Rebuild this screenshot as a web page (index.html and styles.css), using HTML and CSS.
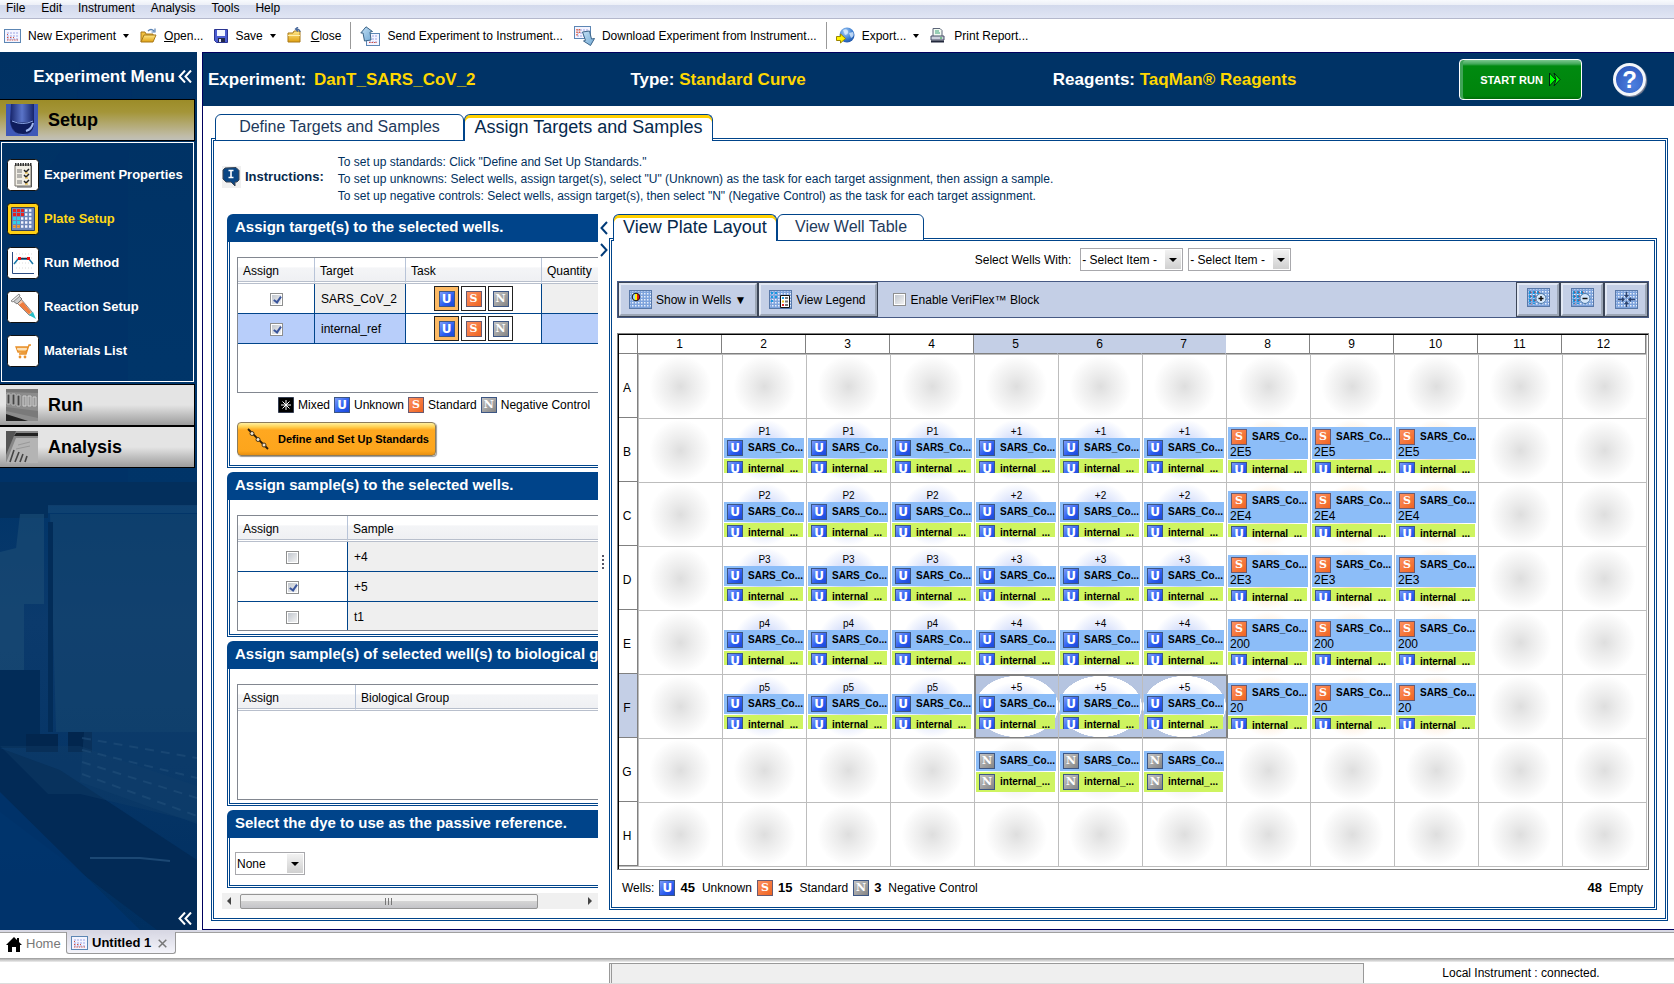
FILE: index.html
```html
<!DOCTYPE html>
<html lang="en">
<head>
<meta charset="utf-8">
<title>DanT_SARS_CoV_2 - Plate Setup</title>
<link rel="stylesheet" href="styles.css">
</head>
<body>
<svg class="defs" aria-hidden="true">
  <defs>
    <pattern id="dots" width="3" height="3" patternUnits="userSpaceOnUse"><rect width="3" height="3" fill="#7da3dc"/><rect width="1.500" height="1.500" fill="#e8f0fc"/></pattern>
    <pattern id="dots2" width="3" height="3" patternUnits="userSpaceOnUse"><rect width="2" height="2" fill="#c9cdf2"/></pattern>
    <linearGradient id="folder" x1="0" y1="0" x2="0" y2="1"><stop offset="0" stop-color="#ffe88a"/><stop offset="1" stop-color="#e0a010"/></linearGradient>
    <linearGradient id="arrow" x1="0" y1="0" x2="1" y2="1"><stop offset="0" stop-color="#c4e0f4"/><stop offset="1" stop-color="#70a8d4"/></linearGradient>
    <radialGradient id="globe" cx=".4" cy=".3" r=".8"><stop offset="0" stop-color="#a8d0f8"/><stop offset=".6" stop-color="#3a7cd0"/><stop offset="1" stop-color="#1a4a9a"/></radialGradient>
    <linearGradient id="tube" x1="0" y1="0" x2="1" y2="0"><stop offset="0" stop-color="#16246a"/><stop offset=".5" stop-color="#5a74c8"/><stop offset="1" stop-color="#16246a"/></linearGradient>
    <symbol id="i-plate" viewBox="0 0 17 14"><rect x=".5" y=".5" width="16" height="13" fill="#f4f4ff" stroke="#5c86b4"/><rect x="2" y="2" width="13" height="10" fill="url(#dots2)"/><path d="M3 5.500h1M3 8.500h2M6 8.500h2M9 8.500h1M3 11h11" stroke="#d05040" stroke-width="1.200" stroke-dasharray="1.400 1"/></symbol>
    <symbol id="i-chev" viewBox="0 0 14 13"><path d="M7 .5 1.500 6.500 7 12.500M13 .5 7.500 6.500 13 12.500" fill="none" stroke="#fff" stroke-width="2"/></symbol>
  </defs>
</svg>

<nav class="menubar" aria-label="Menu">
  <button>File</button><button>Edit</button><button>Instrument</button><button>Analysis</button><button>Tools</button><button>Help</button>
</nav>

<div class="toolbar">
  <button class="tool"><svg width="17" height="14"><use href="#i-plate"/></svg><span>New Experiment</span><i class="caret"></i></button>
  <button class="tool"><svg width="17" height="16" viewBox="0 0 17 16"><path d="M1 14V4h4l1 2h7v3" fill="#f0c040" stroke="#a87818"/><path d="m1 14 3-7h12l-3 7z" fill="url(#folder)" stroke="#a87818"/><path d="M8 3q3-3 6 0M15 .5V4h-3.500" fill="none" stroke="#5a82b4" stroke-width="1.200"/></svg><span><u>O</u>pen...</span></button>
  <button class="tool"><svg width="14" height="14" viewBox="0 0 14 14"><path d="M.5.5h13v13h-11l-2-2z" fill="#4a5cd0" stroke="#2a3490"/><path d="M3 1h8v6H3z" fill="#f2f6ff"/><path d="M4 9h7v4H4z" fill="#22284a"/><path d="M5 10h2v3H5z" fill="#dfe4f4"/></svg><span>Save</span><i class="caret"></i></button>
  <button class="tool wide"><svg width="15" height="17" viewBox="0 0 15 17"><path d="M1 15V6h5l1-2h6v11z" fill="url(#folder)" stroke="#a87818"/><path d="M1 8.500h12" stroke="#fff0b0"/><path d="M13 5q0-3-4-3M11 0 8.500 2 11 4.500" fill="none" stroke="#4a6a9c" stroke-width="1.300"/></svg><span><u>C</u>lose</span></button>
  <i class="sep"></i>
  <button class="tool"><svg width="20" height="20" viewBox="0 0 20 20"><rect x="6.500" y="7.500" width="13" height="12" fill="#f4f4ff" stroke="#5c86b4"/><rect x="8" y="9" width="10" height="9" fill="url(#dots2)"/><path d="M9 16.500h8" stroke="#d05040" stroke-dasharray="1.500 1"/><path d="M6 .8 12.500 5.500 10 6l1 8-6.500 1L3 7 .8 7z" fill="url(#arrow)" stroke="#3c6488"/></svg><span>Send Experiment to Instrument...</span></button>
  <button class="tool"><svg width="21" height="20" viewBox="0 0 21 20"><rect x=".5" y=".5" width="16" height="12" fill="#f4f4ff" stroke="#5c86b4"/><rect x="2" y="2" width="13" height="9" fill="url(#dots2)"/><path d="M3 3v7M5.500 3v5" stroke="#e06040" stroke-width="1.500" stroke-dasharray="1.500 1"/><path d="m8.500 6 7-1 2 8 3-.5-4 7-7-4.500 2-.6z" fill="url(#arrow)" stroke="#3c6488"/></svg><span>Download Experiment from Instrument...</span></button>
  <i class="sep"></i>
  <button class="tool"><svg width="19" height="17" viewBox="0 0 19 17"><circle cx="11" cy="8" r="7.500" fill="url(#globe)"/><path d="M7 3q4-2 5 1t-3 4zM13 6l4-1q2 4-2 6z" fill="#e4f2ff" opacity=".75"/><path d="M.5 9.500h4V7l5 4.500-5 4.500v-2.500h-4z" fill="#fff200" stroke="#9a8400"/></svg><span>Export...</span><i class="caret"></i></button>
  <button class="tool wide"><svg width="15" height="15" viewBox="0 0 15 15"><path d="M3 8V.5h7l2 2V8" fill="#f2fbf2" stroke="#5c6478"/><path d="M5 3h4M5 5h5" stroke="#3ca078"/><path d="M1 8h13v4H1z" fill="#ccd0dc" stroke="#464e66"/><path d="M1 13.500h13" stroke="#22283c" stroke-width="2"/><path d="M10 10h2" stroke="#20b040"/></svg><span>Print Report...</span></button>
</div>

<div class="shell">
  <aside class="side">
    <svg class="side-art" viewBox="0 0 197 878" preserveAspectRatio="none" aria-hidden="true">
      <path d="M128 0q8 50 0 110v320H0V140q80-10 80-140z" fill="#003066" opacity=".4"/>
      <path d="M0 430h197v24H48v12H0z" fill="#032f5c"/>
      <path d="M50 462h147v218H56z" fill="#164670" opacity=".6"/>
      <path d="M48 453h149v8H48z" fill="#184a76" opacity=".6"/>
      <path d="M20 462h24v90H24v66H0V500l16-4z" fill="#1a4a74" opacity=".7"/>
      <path d="M0 618h40v78H0zM48 470h5v210h-5z" fill="#022c58"/>
      <path d="M26 682h32v18H26zM68 680h24v20H68z" fill="#02264e"/>
      <path d="M0 696l60 22 137 90v70h-40L0 760z" fill="#022a56"/>
      <path d="M0 694h80l117 40v36l-117-28H48z" fill="#123e6a" opacity=".4"/>
      <path d="M84 680h113v92L80 730z" fill="#12406c" opacity=".45"/>
      <path d="m82 686 115 20m-115-8 115 28m-115-16 115 36m-115-24 115 42" stroke="#23517c" stroke-width="2" stroke-dasharray="9 7" opacity=".55"/>
      <path d="M0 740l140 138H0z" fill="#00356e" opacity=".8"/><path d="M90 806h50l30 3" stroke="#1c4874" stroke-width="2" fill="none"/>
    </svg>
    <h2 class="side-title">Experiment Menu <svg width="14" height="13"><use href="#i-chev"/></svg></h2>
    <button class="section gold"><svg width="32" height="32" viewBox="0 0 32 32"><rect width="32" height="32" fill="#3e58b8"/><path d="M5 0h23v17q0 14-11 14T4 18z" fill="url(#tube)"/><path d="M5 16q12 5 23 0v4q-1 10-11 10T5 20z" fill="#0e1c5c"/><path d="M6 17q11 5 21 0" stroke="#8ea8e8" fill="none"/><path d="M20 27q6-2 7-8" stroke="#a0b8f0" fill="none" stroke-width="2"/></svg>Setup</button>
    <ul class="steps">
      <li><a href="#properties"><svg width="32" height="32" viewBox="0 0 32 32"><rect x=".5" y=".5" width="31" height="31" rx="3" fill="#fff" stroke="#111"/><path d="M8 6h16v21H8z" fill="#f2efe6" stroke="#77736a"/><path d="M24.500 7v21H10" stroke="#555" fill="none"/><path d="M8 5.500h17" stroke="#333" stroke-width="3" stroke-dasharray="1.500 1"/><path d="M10 11h5M10 13h5M10 16h5M10 18h5M10 22h5M10 24h5" stroke="#777"/><path d="m17 11 2 2 3-3m-5 6 2 2 3-3m-5 7 2 2 3-3" stroke="#222" fill="none" stroke-width="1.500"/><path d="M18 14h3M18 19h3M18 25h3" stroke="#e8b020"/></svg>Experiment Properties</a></li>
      <li class="current"><a href="#plate"><svg width="32" height="32" viewBox="0 0 32 32"><rect x=".5" y=".5" width="31" height="31" rx="3" fill="#ffd014" stroke="#111"/><path d="M4.500 4.500h23v23h-23z" fill="#6d86b8" stroke="#33415e"/><path d="M6 7.500h20M6 11.500h20M6 15.500h20M6 19.500h20M6 23.500h20" stroke="#f4f6ff" stroke-width="2.400" stroke-dasharray="2.400 1.600"/><path d="M6 7.500h11M6 11.500h11" stroke="#e8201c" stroke-width="3" stroke-dasharray="3 1"/><path d="M6 15.500h7M6 19.500h7" stroke="#30d0e8" stroke-width="3" stroke-dasharray="3 1"/><path d="M6 23.500h7" stroke="#e88a20" stroke-width="2.400" stroke-dasharray="3 1"/></svg>Plate Setup</a></li>
      <li><a href="#run-method"><svg width="32" height="32" viewBox="0 0 32 32"><rect x=".5" y=".5" width="31" height="31" rx="3" fill="#fff" stroke="#111"/><path d="M9 7h18M9 11h18M9 16h18M9 21h18" stroke="#ddd" stroke-dasharray="1 2"/><path d="M5.500 5v21.500H27" fill="none" stroke="#2a4a80"/><path d="m7 17 4-5h11l4 5" fill="none" stroke="#1878a8" stroke-width="1.500"/><path d="M13 11.500h8" stroke="#18304c" stroke-width="1.500"/><path d="M11 10h3v3h-3zM20 10h3v3h-3z" fill="#f01010"/></svg>Run Method</a></li>
      <li><a href="#reaction"><svg width="32" height="32" viewBox="0 0 32 32"><rect x=".5" y=".5" width="31" height="31" rx="3" fill="#fff" stroke="#111"/><path d="m10 12 4-4 11 13 1 4-4-1z" fill="#f4c4a4" stroke="#888"/><path d="m12 14 4-3 8 10-2 2z" fill="#f07c3c"/><path d="m22 24 4-3 3 7z" fill="#28c0c8"/><path d="m6 10 6-5 3 3-5 5z" fill="#ccc" stroke="#777"/><path d="m4 10 2 1 7-6-1-2z" fill="#eee" stroke="#888"/></svg>Reaction Setup</a></li>
      <li><a href="#materials"><svg width="32" height="32" viewBox="0 0 32 32"><rect x=".5" y=".5" width="31" height="31" rx="3" fill="#fff" stroke="#111"/><path d="M24 10h-2l-3 9h-7M9 12h12l-2 5h-8z" fill="#f8c070" stroke="#e8902a" stroke-width="1.300"/><path d="M10 14h10" stroke="#fff"/><circle cx="13" cy="22" r="1.400" fill="#e8902a"/><circle cx="18" cy="22" r="1.400" fill="#e8902a"/></svg>Materials List</a></li>
    </ul>
    <button class="section grey"><svg width="32" height="32" viewBox="0 0 32 32"><rect width="32" height="32" fill="#8c8c8c"/><path d="M0 0h32v4L0 3z" fill="#777"/><path d="M1 5h3v10H1zM6 5h3v11H6zM11 6h3v11h-3z" fill="#444" stroke="#bbb"/><path d="M17 7h3v10h-3zM22 7h3v10h-3zM27 8h3v9h-3z" fill="#999" stroke="#ccc"/><path d="M0 18l32 4v7L0 22z" fill="#7a7a7a"/><path d="m0 25 22 7H0z" fill="#222"/></svg>Run</button>
    <button class="section grey"><svg width="32" height="32" viewBox="0 0 32 32"><rect width="32" height="32" fill="#888"/><path d="M10 2h22v3H8z" fill="#222"/><path d="M10 7h22v25H0z" fill="#b4b4b4"/><path d="M0 0h10L0 24z" fill="#555"/><path d="m4 31 4-12M9 31l4-10M14 31l3-8M19 31l2-6" stroke="#444" stroke-width="1.600"/><path d="m12 14 12-3M10 18l14-3" stroke="#999"/></svg>Analysis</button>
    <svg class="collapse" width="14" height="13"><use href="#i-chev"/></svg>
  </aside>

  <main class="work">
    <header class="head">
      <p>Experiment: <b class="gap">DanT_SARS_CoV_2</b></p>
      <p>Type: <b>Standard Curve</b></p>
      <p>Reagents: <b>TaqMan® Reagents</b></p>
      <button class="start">START RUN <svg width="12" height="15" viewBox="0 0 12 15"><path d="M.5 1 6.500 7.500.5 14zM5 1l6 6.500L5 14l2-6.500z" fill="#0f0" stroke="#021"/></svg></button>
      <button class="help" aria-label="Help">?</button>
    </header>

    <div class="body">
      <div class="tabs main-tabs" role="tablist"><button role="tab">Define Targets and Samples</button><button role="tab" class="on">Assign Targets and Samples</button></div>
      <section class="panel">
        <div class="info">
          <svg width="19" height="22" viewBox="0 0 19 22"><rect width="19" height="22" fill="#f0f0f0"/><path d="m3 2 11-.5 3 3V14l-2 2h-2v4l-4-4H4l-3-3V4z" fill="#0a4684" stroke="#3c4654"/><path d="M6.500 4.500h5M9 4v8M6.500 11.500h5" stroke="#fff" stroke-width="1.600"/></svg>
          <strong>Instructions:</strong>
          <p>To set up standards: Click "Define and Set Up Standards."<br>To set up unknowns: Select wells, assign target(s), select "U" (Unknown) as the task for each target assignment, then assign a sample.<br>To set up negative controls: Select wells, assign target(s), then select "N" (Negative Control) as the task for each target assignment.</p>
        </div>

        <div class="split">
          <div class="assign">
            <section class="group">
              <h3>Assign target(s) to the selected wells.</h3>
              <div class="content">
                <div class="frame tall">
                  <table class="targets">
                    <colgroup><col class="c77"><col class="c91"><col class="c136"><col></colgroup>
                    <thead><tr><th>Assign</th><th>Target</th><th>Task</th><th>Quantity</th></tr></thead>
                    <tbody>
                      <tr><td class="tick"><input type="checkbox" checked aria-label="Assign SARS_CoV_2"></td><td class="dim">SARS_CoV_2</td><td class="task"><button class="on"><i class="b u">U</i></button><button><i class="b s">S</i></button><button><i class="b n">N</i></button></td><td class="dim"></td></tr>
                      <tr class="picked"><td class="tick"><input type="checkbox" checked aria-label="Assign internal_ref"></td><td>internal_ref</td><td class="task"><button class="on"><i class="b u">U</i></button><button><i class="b s">S</i></button><button><i class="b n">N</i></button></td><td></td></tr>
                    </tbody>
                  </table>
                </div>
                <div class="legend"><svg width="16" height="16" viewBox="0 0 16 16" role="img" aria-label="Mixed task"><path d="M.5.5h15v15H.5z" stroke="#333c50"/><path d="M8 3v10M3 8h10M4.500 4.500l7 7M11.500 4.500l-7 7" stroke="#fff"/></svg>Mixed<i class="b u">U</i>Unknown<i class="b s">S</i>Standard<i class="b n">N</i>Negative Control</div>
                <button class="standards"><svg width="22" height="22" viewBox="0 0 22 22"><path d="m1 1 20 20" stroke="#2a1c08" stroke-width="1.800"/><g fill="#f0e4d0" stroke="#4a3414"><circle cx="5" cy="5.500" r="2"/><circle cx="11" cy="11.500" r="2"/><circle cx="17" cy="17" r="2"/></g></svg>Define and Set Up Standards</button>
              </div>
            </section>
            <section class="group">
              <h3>Assign sample(s) to the selected wells.</h3>
              <div class="content">
                <div class="frame">
                  <table>
                    <colgroup><col class="c110"><col></colgroup>
                    <thead><tr><th>Assign</th><th>Sample</th></tr></thead>
                    <tbody>
                      <tr><td class="tick"><input type="checkbox" aria-label="Assign +4"></td><td class="dim">+4</td></tr>
                      <tr><td class="tick"><input type="checkbox" checked aria-label="Assign +5"></td><td class="dim">+5</td></tr>
                      <tr><td class="tick"><input type="checkbox" aria-label="Assign t1"></td><td class="dim">t1</td></tr>
                    </tbody>
                  </table>
                </div>
              </div>
            </section>
            <section class="group">
              <h3>Assign sample(s) of selected well(s) to biological group.</h3>
              <div class="content">
                <div class="frame">
                  <table>
                    <colgroup><col class="c118"><col></colgroup>
                    <thead><tr><th>Assign</th><th>Biological Group</th></tr></thead>
                  </table>
                </div>
              </div>
            </section>
            <section class="group">
              <h3>Select the dye to use as the passive reference.</h3>
              <div class="content dye"><span class="pick short"><select aria-label="Passive reference"><option>None</option></select></span></div>
            </section>
            <div class="hscroll"><span class="left"></span><span class="thumb"><i></i></span><span class="right"></span></div>
          </div>

          <div class="splitter">
            <svg width="8" height="36" viewBox="0 0 8 36"><path d="M7 1 1.500 7 7 13M1 23l5.500 6L1 35" fill="none" stroke="#003a78" stroke-width="2"/></svg>
            <span class="grip"></span>
          </div>

          <div class="plate-side">
            <div class="tabs" role="tablist"><button role="tab" class="on">View Plate Layout</button><button role="tab">View Well Table</button></div>
            <section class="plate-panel">
              <div class="filter"><label for="by">Select Wells With:</label><span class="pick"><select id="by"><option>- Select Item -</option></select></span><span class="pick"><select aria-label="Item"><option>- Select Item -</option></select></span></div>
              <div class="bar">
                <button class="bevel"><svg width="23" height="19" viewBox="0 0 23 19"><rect x=".5" y=".5" width="22" height="18" fill="url(#dots)" stroke="#5878a8"/><circle cx="7" cy="7" r="3.500" fill="#fff200"/><path d="M8 3.500a3.600 3.600 0 0 1 0 7z" fill="#e01818"/><path d="M6 3.500a3.600 3.600 0 0 0 0 7z" fill="#9ad0ff"/><circle cx="7" cy="7" r="3.800" fill="none" stroke="#111"/></svg>Show in Wells ▼</button>
                <button class="bevel"><svg width="23" height="19" viewBox="0 0 23 19"><rect x=".5" y=".5" width="22" height="18" fill="url(#dots)" stroke="#5878a8"/><path d="M3 2v11M7 2v8" stroke="#1898e0" stroke-width="2" stroke-dasharray="2 2"/><path d="M11.500 5.500h9v12h-9z" fill="#fff" stroke="#111"/><path d="M13 8h2" stroke="#20a0e0" stroke-width="2"/><path d="M13 11.500h2" stroke="#e8c020" stroke-width="2"/><path d="M13 15h2" stroke="#e02020" stroke-width="2"/><path d="M16 8h3M16 11.500h3M16 15h3" stroke="#777" stroke-width="2"/></svg>View Legend</button>
                <label class="flex-check"><input type="checkbox">Enable VeriFlex™ Block</label>
                <button class="bevel sq" aria-label="Zoom in"><svg width="23" height="19" viewBox="0 0 23 19"><rect x=".5" y=".5" width="22" height="18" fill="url(#dots)" stroke="#5878a8"/><path d="M3 3v13M7 3v13M11 3v6" stroke="#1898e0" stroke-width="2" stroke-dasharray="3 1"/><path d="M4 3.500v13M8 3.500v12M12 3.500v4" stroke="#a02828" stroke-dasharray="1.500 2.500"/><circle cx="14" cy="10.500" r="5" fill="#d4e6fa" stroke="#4a78a8"/><path d="M11.500 10.500h5M14 8v5" stroke="#111" stroke-width="1.500"/></svg></button>
                <button class="bevel sq" aria-label="Zoom out"><svg width="23" height="19" viewBox="0 0 23 19"><rect x=".5" y=".5" width="22" height="18" fill="url(#dots)" stroke="#5878a8"/><path d="M3 3v13M7 3v13M11 3v6" stroke="#1898e0" stroke-width="2" stroke-dasharray="3 1"/><path d="M4 3.500v13M8 3.500v12M12 3.500v4" stroke="#a02828" stroke-dasharray="1.500 2.500"/><circle cx="14" cy="10.500" r="5" fill="#d4e6fa" stroke="#4a78a8"/><path d="M11.500 10.500h5" stroke="#111" stroke-width="1.500"/></svg></button>
                <button class="bevel sq low" aria-label="Fit to view"><svg width="23" height="19" viewBox="0 0 23 19"><rect x=".5" y=".5" width="22" height="18" fill="url(#dots)" stroke="#5878a8"/><path d="M3 9.500h5M15 9.500h5M11.500 2v4M11.500 13v4" stroke="#2c4470" stroke-width="1.500"/><path d="M7 7v5l3-2.500zM16 7v5l-3-2.500zM9 5h5l-2.500 3zM9 14h5l-2.500-3z" fill="#2c4470"/></svg></button>
              </div>
              <div class="plate"><table id="wells"></table></div>
              <div class="counts"><span>Wells:</span><i class="b u">U</i><b>45</b>Unknown<i class="b s">S</i><b>15</b>Standard<i class="b n">N</i><b>3</b>Negative Control<span class="empty"><b>48</b>Empty</span></div>
            </section>
          </div>
        </div>
      </section>
    </div>
  </main>
</div>

<nav class="docs" aria-label="Open documents">
  <button class="home"><svg width="16" height="15" viewBox="0 0 16 15"><path d="M8 0 0 8h2v7h4v-5h4v5h4V8h2l-3-3V1h-2v2z" fill="#000"/></svg>Home</button>
  <button class="doc"><svg width="17" height="14"><use href="#i-plate"/></svg>Untitled 1<svg class="x" width="9" height="9" viewBox="0 0 9 9"><path d="m.7.7 7.600 7.600M8.300.7.7 8.300" stroke="#777" stroke-width="1.500"/></svg></button>
</nav>
<footer class="status"><div class="progress"></div><p>Local Instrument : connected.</p></footer>
<script src="script.js"></script>
</body>
</html>
```

FILE: styles.css
```css
* { box-sizing: border-box; }
body {
  margin: 0; min-height: 100vh; display: flex; flex-direction: column;
  font: 12px/16px "Liberation Sans", Arial, sans-serif; color: #000; background: #fff;
}
button, select { font: inherit; color: inherit; background: none; border: 0; padding: 0; margin: 0; }
h2, h3, p, ul { margin: 0; padding: 0; font-weight: inherit; }
svg { flex: none; display: block; }
i { font-style: normal; }
.defs { position: absolute; width: 0; height: 0; }

.menubar {
  height: 19px; display: flex; gap: 16px; padding-left: 6px; align-items: flex-start;
  background: linear-gradient(#f8fafd 0, #eceff7 5px, #d2d9ec 5px, #e0e5f4 18px);
  border-bottom: 1px solid #b4b8cc;
}
.toolbar { height: 33px; display: flex; align-items: center; padding: 0 4px; gap: 11px; }
.tool { display: flex; align-items: center; gap: 7px; }
.tool.wide { gap: 9px; }
.caret { border: 3px solid transparent; border-top: 4px solid #000; border-bottom: 0; }
.sep { width: 1px; height: 27px; background: #999; margin: 0 -2px; }

.shell { flex: 1; display: grid; grid-template-columns: 197px minmax(0, 1fr); column-gap: 5px; }
.side { position: relative; background: linear-gradient(#003163, #003569 35%, #003468 50%, #0b3a6c 65%, #002f60); overflow: hidden; }
.side-art { position: absolute; inset: 0; width: 100%; height: 100%; }
.side > :not(.side-art):not(.collapse) { position: relative; }
.side-title {
  height: 47px; display: flex; align-items: center; justify-content: flex-end; gap: 3px;
  padding: 2px 5px 0 0; font-weight: bold; font-size: 17px; color: #fff;
}
.section {
  width: 195px; height: 42px; display: flex; align-items: center; gap: 10px; padding-left: 6px;
  border: solid #000; border-width: 1px 1px 1px 0; font-weight: bold; font-size: 18px;
}
.gold { background: linear-gradient(#9c8c28, #a49538 30%, #c0bca8 90%, #c0c0b8); }
.grey { background: linear-gradient(#e4e4e4 50%, #c0c0c0 75%, #9c9c9c); }
.steps {
  list-style: none; width: 193px; margin: 1px 0 2px 1px; padding: 16px 0 14px 5px;
  border: 1px solid #fff; display: grid; gap: 12px;
}
.steps a { display: flex; align-items: center; gap: 5px; color: #fff; text-decoration: none; font-weight: bold; font-size: 13px; white-space: nowrap; }
.steps .current a { color: #ffd816; }
.collapse { position: absolute; right: 5px; bottom: 5px; }

.work { border: solid #00005e; border-width: 1px 0 1px 1px; display: flex; flex-direction: column; min-width: 0; }
.head {
  height: 53px; background: #003366; display: grid; align-items: center; padding: 0 28px 0 5px;
  grid-template-columns: 26fr 26fr 25fr auto auto; color: #fff; font-size: 17px; font-weight: bold; white-space: nowrap;
}
.head b { color: #ffd700; }
.head .gap { margin-left: 3px; }
.start {
  width: 123px; height: 41px; margin-right: 31px; display: flex; align-items: center; justify-content: center; gap: 6px;
  font-size: 11px; font-weight: bold; color: #fff; border: 1px solid #fff; border-radius: 4px;
  background: linear-gradient(#7cc890, #40a858 4px, #008a10 6px, #00840c 36px, #006a08);
  box-shadow: inset 3px 0 0 #40a458;
}
.help {
  width: 33px; height: 33px; border-radius: 50%; border: 3px solid #f4f6fa; color: #fff; font-size: 24px; font-weight: bold; line-height: 24px;
  background: radial-gradient(circle at 60% 70%, #4c80e0, #2a50b4); box-shadow: 1px 1px 1px #889;
}

.body { flex: 1; display: flex; flex-direction: column; padding: 8px 6px 8px 8px; }
.tabs { display: flex; padding-left: 4px; margin-bottom: -3px; position: relative; z-index: 1; }
.tabs button {
  height: 27px; padding: 0 17px 2px; border: 1px solid #00448a; border-radius: 6px 6px 0 0; background: #fff;
  font-size: 16px; line-height: 20px; color: #1e3a5c; white-space: nowrap;
}
.tabs .on { border-bottom: 0; padding: 0 9px 3px; font-size: 18px; color: #06294c; box-shadow: inset 0 3px 0 #ffd000; }
.main-tabs button { width: 249px; }
.panel { flex: 1; display: flex; flex-direction: column; border: 3px double #00448a; padding: 0 8px 8px; }
.info { height: 73px; display: flex; align-items: center; color: #00305e; line-height: 17px; padding-top: 4px; }
.info svg, .info strong { margin-bottom: 6px; }
.info strong { font-size: 13px; margin-right: 14px; margin-left: 4px; color: #06294c; }

.split { flex: 1; display: flex; }
.assign { width: 376px; flex: none; overflow: hidden; display: flex; flex-direction: column; gap: 4px; }
.group { width: 520px; margin-left: 5px; }
.group h3 {
  height: 28px; padding-left: 8px; line-height: 26px; background: #00448a; border-radius: 6px 0 0 0;
  color: #fff; font-size: 15px; font-weight: bold; white-space: nowrap;
}
.content { border: 3px double #00448a; border-width: 0 0 3px 3px; padding: 15px 0 3px 7px; }
.group:first-child .content { padding-bottom: 9px; }
.frame { height: 116px; overflow: hidden; border: 1px solid #828790; }
.frame.tall { height: 136px; }
.frame table { width: 100%; table-layout: fixed; border-collapse: separate; border-spacing: 0; }
.frame th {
  height: 26px; padding: 4px 0 0 5px; line-height: 15px; text-align: left; font-weight: normal;
  background: linear-gradient(#fff 40%, #f4f5f7 42%, #eff0f3); border-right: 1px solid #b8c4d8; border-bottom: 3px double #b8bfcc;
}
.frame td { height: 30px; padding: 0 0 0 6px; border-right: 1px solid #00448a; border-bottom: 1px solid #00448a; }
.frame td.tick { padding: 0; text-align: center; }
.frame td.task { padding: 0; background: #fff; text-align: center; }
.dim { background: #efefef; }
.picked td { background: #b8cefa; }
.c77 { width: 77px; } .c91 { width: 91px; } .c136 { width: 136px; } .c110 { width: 110px; } .c118 { width: 118px; }
.task button { width: 25px; height: 25px; border: 1px solid #222; background: #fff; display: inline-grid; place-items: center; vertical-align: middle; margin: 0 1px; }
.task .on { background: #fdba64; }

input[type=checkbox] {
  appearance: none; width: 13px; height: 13px; margin: 0; vertical-align: middle; position: relative;
  border: 1px solid #8e8f8f; background: linear-gradient(135deg, #bcc2ca, #f6f6f6); box-shadow: inset 0 0 0 1px #fff;
}
input[type=checkbox]:checked::after {
  content: ""; position: absolute; left: 4px; top: 1px; width: 3px; height: 6px;
  border: solid #3a559c; border-width: 0 2px 2px 0; transform: rotate(35deg);
}
.b {
  display: inline-block; flex: none; width: 16px; height: 16px; border: 1px solid #3c5684; color: #fff; text-align: center;
  font: bold 11px/14px "DejaVu Serif", serif;
}
.b.u { font: bold 12px/14px "DejaVu Sans", sans-serif; background: linear-gradient(135deg, #7c9cf8, #2a5cf0 60%, #1c48d8); }
.b.s { background: linear-gradient(135deg, #fc9060, #f06420); border-color: #6a5a70; }
.b.n { background: linear-gradient(135deg, #c4c4c4, #848484); }
.legend { display: flex; align-items: center; gap: 4px; margin: 4px 0 9px 41px; white-space: nowrap; }
.standards {
  width: 199px; height: 34px; display: flex; align-items: center; gap: 9px; padding-left: 9px;
  font-size: 11px; font-weight: bold; white-space: nowrap; border: 1px solid #8c7c5c; border-radius: 4px;
  background: linear-gradient(#fff0a0, #ffd050 4px, #ffa820 7px, #fda51c 28px, #e89010); box-shadow: 1px 1px 1px #999;
}
.content.dye { padding: 14px 0 10px 5px; }
.pick { position: relative; display: inline-block; width: 103px; height: 23px; border: 1px solid #a8a8ac; background: #fff; }
.pick select { appearance: none; display: block; width: 100%; height: 21px; padding-left: 1px; outline: 0; border-radius: 0; }
.pick::before { content: ""; position: absolute; right: 1px; top: 1px; bottom: 1px; width: 16px; background: linear-gradient(#f2f2f2, #d0d0d0); pointer-events: none; }
.pick::after { content: ""; position: absolute; right: 5px; top: 9px; border: 4px solid transparent; border-top-color: #000; border-bottom: 0; pointer-events: none; }
.pick.short { width: 70px; display: block; }
.hscroll { margin-top: 1px; height: 16px; background: #f0f0f0; display: flex; align-items: center; padding: 0 6px 0 5px; }
.hscroll .left { border: 4px solid transparent; border-right-color: #444; border-left: 0; margin-right: 9px; }
.hscroll .right { border: 4px solid transparent; border-left-color: #444; border-right: 0; margin-left: auto; }
.thumb { width: 298px; height: 15px; border: 1px solid #959595; border-radius: 2px; background: linear-gradient(#f2f2f2 45%, #d4d4d4 50%, #c4c4c8); display: grid; place-items: center; }
.thumb i { width: 8px; height: 7px; background: repeating-linear-gradient(90deg, #777 0 1px, transparent 1px 3px); }

.splitter { width: 11px; flex: none; display: flex; flex-direction: column; padding: 7px 0 0 2px; }
.grip { width: 2px; height: 14px; margin: 298px 0 0 2px; background: repeating-linear-gradient(#556 0 2px, transparent 2px 4px); }

.plate-side { flex: 1; min-width: 0; display: flex; flex-direction: column; }
.plate-side .tabs button { width: 147px; }
.plate-side .tabs .on { width: 164px; }
.plate-panel { flex: 1; border: 3px double #00448a; padding: 7px 5px 11px; display: flex; flex-direction: column; }
.filter { display: flex; align-items: center; justify-content: center; gap: 5px; margin-bottom: 10px; }
.filter label { margin-right: 4px; }
.bar { height: 37px; display: flex; align-items: stretch; background: #c4cfe6; border: 1px solid #475a84; margin-bottom: 15px; }
.bevel {
  display: flex; align-items: center; gap: 4px; padding: 0 9px 0 8px; background: #c4cfe6; white-space: nowrap;
  border: 3px solid; border-color: #e2e8f4 #9ca6b6 #9ca6b6 #e2e8f4; outline: 1px solid #3c4658; outline-offset: -1px;
}
.bevel.sq { width: 44px; padding: 0 0 4px; justify-content: center; }
.bevel.low { padding-bottom: 0; }
.flex-check { display: flex; align-items: center; gap: 5px; margin: 0 auto 0 15px; }

.plate { flex: 1; border: 1px solid #808080; padding: 1px 1px 2px 1px; box-shadow: inset 1px 1px 0 #000; }
#wells { width: 100%; table-layout: fixed; border-collapse: separate; border-spacing: 0; border: solid #bdbdbd; border-width: 0 1px 1px 0; }
#wells th { font-weight: normal; font-size: 12px; padding: 0; }
#wells thead th { height: 19px; border-right: 1px solid #808080; border-bottom: 1px solid #808080; }
#wells th:first-child { width: 19px; }
#wells tbody th { border-right: 1px solid #808080; border-bottom: 1px solid #808080; padding: 4px 2px 0 0; }
#wells th.hot { background: #c4cfe6; }
#wells thead th.hot { border-right-color: #c4cfe6; }
#wells td { height: 64px; padding: 0; vertical-align: top; border: solid #bdbdbd; border-width: 1px 0 0 1px; }
#wells td { background: radial-gradient(circle 31px at 50% 50%, #dedede, #ececec 40%, #fff); }
#wells td.U { background: radial-gradient(circle 31px at 50% 50%, #b8c8f8, #fff); }
#wells td.S { background: radial-gradient(circle 31px at 50% 50%, #fcd8b0, #fff); }
#wells td.sel {
  background: radial-gradient(ellipse 42px 31px at 50% 50%, #c0cefa 0, #fff 80%, #fff 98%, #b5c4e0 99%);
  border-top-color: #808080; box-shadow: inset 0 1px 0 #808080, inset 0 -1px 0 #808080;
}
#wells td.edge { border-left: 2px solid #808080; }
.well { height: 54px; padding: 5px 1px 0; overflow: hidden; }
.edge .well { padding-left: 0; }
.S .well { padding-top: 8px; }
.N .well { padding-top: 12px; }
.well p { height: 14px; line-height: 16px; text-align: center; font-size: 10px; }
.band { display: grid; grid-template-columns: 16px 1fr; column-gap: 5px; padding: 2px 0 2px 3px; font-size: 10px; font-weight: bold; line-height: 16px; white-space: nowrap; max-width: 80px; overflow: hidden; }
.blue { background: #8cbdf8; margin-bottom: 1px; }
.green { background: #cef460; max-width: 79px; }
.band small { grid-column: 1 / 3; margin: 0 0 -2px -1px; font-size: 12px; font-weight: normal; line-height: 14px; }
.counts { display: flex; align-items: center; gap: 5px; margin-top: 10px; padding: 0 6px 0 5px; }
.counts b { font-size: 13px; margin-right: 2px; }
.counts .empty { margin-left: auto; display: flex; gap: 5px; }

.docs {
  height: 32px; display: flex; align-items: flex-start; border-top: 2px solid #d8d8e4;
  background: linear-gradient(#a0a0a0, #a0a0a0) top / 100% 1px no-repeat, linear-gradient(#999, #c8c8c8 50%, #eee) bottom / 100% 4px no-repeat;
}
.docs button { display: flex; align-items: center; height: 22px; gap: 4px; padding-top: 2px; }
.docs .home { width: 66px; padding-left: 6px; color: #777; }
.home, .doc { font-size: 13px; }
.docs .doc { font-weight: bold; padding: 1px 8px 0 4px; border: 1px solid #999; border-top: 0; border-radius: 0 0 3px 3px; background: linear-gradient(#d8d8e4, #f4f4fa); }
.doc .x { margin-left: 3px; }
.status { height: 22px; display: grid; grid-template-columns: 609fr 755fr 310fr; align-items: center; border-bottom: 1px solid #ddd; }
.progress { grid-column: 2; height: 20px; background: #efefef; border: solid #999; border-width: 1px 1px 0 3px; border-left-style: double; }
.status p { text-align: center; padding-left: 4px; }
```

FILE: script.js
```js
// Plate contents: row letter -> sample name per column block
const samples = { B: ['P1', '+1', '2E5'], C: ['P2', '+2', '2E4'], D: ['P3', '+3', '2E3'], E: ['p4', '+4', '200'], F: ['p5', '+5', '20'] };
const badge = t => `<i class="b ${t.toLowerCase()}">${t}</i>`;
const band = (color, t, name, extra = '') => `<div class="band ${color}">${badge(t)}<span>${name}</span>${extra}</div>`;

function well(row, col) {
  const s = samples[row];
  const edge = row === 'F' && (col === 5 || col === 8) ? ' edge' : '';
  if (s && col >= 2 && col <= 7) {
    const name = col < 5 ? s[0] : s[1];
    const sel = row === 'F' && col > 4 ? ' sel' : '';
    return `<td class="U${sel}${edge}"><div class="well"><p>${name}</p>${band('blue', 'U', 'SARS_Co...')}${band('green', 'U', 'internal_...')}</div></td>`;
  }
  if (s && col >= 8 && col <= 10)
    return `<td class="S${edge}"><div class="well">${band('blue', 'S', 'SARS_Co...', `<small>${s[2]}</small>`)}${band('green', 'U', 'internal_...')}</div></td>`;
  if (row === 'G' && col >= 5 && col <= 7)
    return `<td class="N"><div class="well">${band('blue', 'N', 'SARS_Co...')}${band('green', 'N', 'internal_...')}</div></td>`;
  return '<td></td>';
}

const cols = Array.from({ length: 12 }, (_, i) => i + 1);
const head = '<thead><tr><th></th>' + cols.map(c => `<th${c > 4 && c < 8 ? ' class="hot"' : ''}>${c}</th>`).join('') + '</tr></thead>';
const body = [...'ABCDEFGH'].map(r => `<tr><th${r === 'F' ? ' class="hot"' : ''}>${r}</th>${cols.map(c => well(r, c)).join('')}</tr>`).join('');
document.getElementById('wells').innerHTML = head + '<tbody>' + body + '</tbody>';
```
